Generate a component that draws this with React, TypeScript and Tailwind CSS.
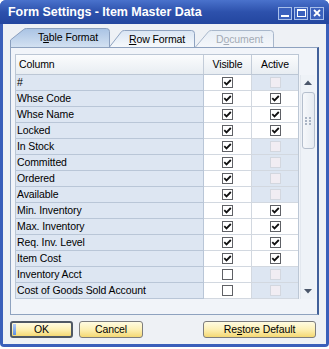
import React from "react";

type CB = "on" | "off" | "dis";

const rows: { name: string; vis: CB; act: CB }[] = [
  { name: "#", vis: "on", act: "dis" },
  { name: "Whse Code", vis: "on", act: "on" },
  { name: "Whse Name", vis: "on", act: "on" },
  { name: "Locked", vis: "on", act: "on" },
  { name: "In Stock", vis: "on", act: "dis" },
  { name: "Committed", vis: "on", act: "dis" },
  { name: "Ordered", vis: "on", act: "dis" },
  { name: "Available", vis: "on", act: "dis" },
  { name: "Min. Inventory", vis: "on", act: "on" },
  { name: "Max. Inventory", vis: "on", act: "on" },
  { name: "Req. Inv. Level", vis: "on", act: "on" },
  { name: "Item Cost", vis: "on", act: "on" },
  { name: "Inventory Acct", vis: "off", act: "dis" },
  { name: "Cost of Goods Sold Account", vis: "off", act: "dis" },
];

function Box({ s }: { s: CB }) {
  if (s === "dis") {
    return <div className="w-[11px] h-[11px] border border-[#d3d7df] bg-[#f1edf3]" />;
  }
  return (
    <div className="w-[11px] h-[11px] border border-[#5f6166] bg-white flex items-center justify-center">
      {s === "on" && (
        <svg width="9" height="9" viewBox="0 0 9 9">
          <path d="M1.3 4.2 L3.5 6.4 L7.8 2" fill="none" stroke="#111" strokeWidth="1.8" />
        </svg>
      )}
    </div>
  );
}

function Tab({
  w,
  h,
  d,
  fillTop,
  fillBot,
  stroke,
  id,
  className,
  children,
}: {
  w: number;
  h: number;
  d: string;
  fillTop: string;
  fillBot: string;
  stroke: string;
  id: string;
  className: string;
  children: React.ReactNode;
}) {
  return (
    <div className={"relative shrink-0 flex items-center " + className}>
      <svg className="absolute left-0 top-0" width={w} height={h} viewBox={`0 0 ${w} ${h}`}>
        <defs>
          <linearGradient id={id} x1="0" y1="0" x2="0" y2="1">
            <stop offset="0" stopColor={fillTop} />
            <stop offset="1" stopColor={fillBot} />
          </linearGradient>
        </defs>
        <path d={d + " Z"} fill={`url(#${id})`} stroke="none" />
        <path d={d} fill="none" stroke={stroke} strokeWidth="1" />
      </svg>
      <div className="relative w-full">{children}</div>
    </div>
  );
}

function Btn({
  className,
  children,
  def,
}: {
  className: string;
  children: React.ReactNode;
  def?: boolean;
}) {
  return (
    <div
      className={
        "relative h-[17px] rounded-[3px] flex items-center justify-center bg-gradient-to-b from-[#fffbe2] via-[#fdf0b4] to-[#f4d872] text-black " +
        (def ? "border-2 border-[#4f5864] " : "border border-[#7d7d7d] ") +
        className
      }
    >
      {def && <div className="absolute left-[1px] top-[1px] bottom-[1px] w-[3px] bg-gradient-to-b from-[#b4cdf6] to-[#5b8ee6]" />}
      {children}
    </div>
  );
}

export default function App() {
  return (
    <div className="w-[329px] h-[349px] bg-white font-['Liberation_Sans',Arial,sans-serif] text-[10.5px] tracking-[-0.1px] text-black overflow-hidden">
      <div className="w-[329px] h-[347px] flex flex-col rounded-t-[6px] rounded-b-[4px] overflow-hidden bg-[#3a5fba]">
        {/* Title bar */}
        <div className="h-[24px] shrink-0 flex items-center justify-between pl-[8px] pr-[5px] bg-gradient-to-b from-[#4a72cc] via-[#2d51ac] to-[#23469f]">
          <span className="text-white font-bold text-[12.5px] tracking-[-0.05px] leading-none pt-[1px]">
            Form Settings - Item Master Data
          </span>
          <div className="flex gap-[2px] pt-[2px]">
            <div className="w-[14px] h-[13px] border border-[#a8bfea] bg-[#3b61bd] flex items-end justify-center pb-[2px]">
              <div className="w-[8px] h-[2px] bg-white" />
            </div>
            <div className="w-[14px] h-[13px] border border-[#a8bfea] bg-[#3b61bd] flex items-center justify-center">
              <div className="w-[9px] h-[8px] border border-white border-t-[2px]" />
            </div>
            <div className="w-[14px] h-[13px] border border-[#a8bfea] bg-[#3b61bd] flex items-center justify-center">
              <svg width="8" height="8" viewBox="0 0 8 8">
                <path d="M1 1 L7 7 M7 1 L1 7" stroke="white" strokeWidth="1.8" />
              </svg>
            </div>
          </div>
        </div>

        {/* Body */}
        <div className="flex-1 mx-[3px] mb-[3px] bg-[#eef1f5] flex flex-col px-[7px] pt-[4px]">
          {/* Tabs */}
          <div className="h-[19px] flex items-end">
            <Tab
              w={100}
              h={19}
              id="t1"
              d="M0.5 19 V12 L13.5 1.6 Q14.6 0.5 16.5 0.5 H96.5 Q99.5 0.5 99.5 3.5 V19"
              fillTop="#a9c3e4"
              fillBot="#d3e1f1"
              stroke="#8a9fbe"
              className="w-[100px] h-[19px] z-20 pl-[16px]"
            >
              <div className="text-center pt-[1px]">
                T<span className="underline">a</span>ble Format
              </div>
            </Tab>
            <Tab
              w={86}
              h={17}
              id="t2"
              d="M0.5 17 L12.5 1.6 Q13.5 0.5 15.5 0.5 H82.5 Q85.5 0.5 85.5 3.5 V17"
              fillTop="#d9e5f3"
              fillBot="#f6f9fc"
              stroke="#8fa3c0"
              className="w-[86px] h-[17px] ml-[-1px] z-10 pl-[10px]"
            >
              <div className="text-center pt-[2px]">
                <span className="underline">R</span>ow Format
              </div>
            </Tab>
            <Tab
              w={79}
              h={17}
              id="t3"
              d="M0.5 17 L13.5 1.6 Q14.5 0.5 16.5 0.5 H75.5 Q78.5 0.5 78.5 3.5 V17"
              fillTop="#e6edf5"
              fillBot="#f5f7fa"
              stroke="#a8b7cb"
              className="w-[79px] h-[17px] pl-[10px] text-[#a3abb6]"
            >
              <div className="text-center pt-[2px]">
                D<span className="underline">o</span>cument
              </div>
            </Tab>
          </div>

          {/* Panel */}
          <div className="h-[268px] shrink-0 border border-[#8ea2bf] border-r-[2px] border-r-[#41609a] bg-[#f1f4f9] pl-[4px] pt-[6px] flex">
            {/* Grid */}
            <div className="w-[284px] shrink-0 flex flex-col">
              <div className="flex h-[21px] border border-[#bcc7d5] bg-gradient-to-b from-[#fbfcfd] to-[#e8edf2]">
                <div className="w-[188px] pl-[3px] flex items-center border-r border-[#c3ccd8]">Column</div>
                <div className="w-[48px] flex items-center justify-center border-r border-[#c3ccd8]">Visible</div>
                <div className="w-[46px] flex items-center justify-center">Active</div>
              </div>
              {rows.map((r) => (
                <div key={r.name} className="flex h-[16px] border-l border-r border-[#bcc7d5]">
                  <div className="w-[188px] pl-[1px] flex items-center bg-[#dde6f2] border-b border-r border-[#b9c6d7] leading-none">
                    {r.name}
                  </div>
                  <div className="w-[48px] flex items-center justify-center bg-white border-b border-r border-[#d2d8e0]">
                    <Box s={r.vis} />
                  </div>
                  <div
                    className={
                      "w-[46px] flex items-center justify-center border-b border-[#d2d8e0] " +
                      (r.act === "dis" ? "bg-[#dde6f2]" : "bg-white")
                    }
                  >
                    <Box s={r.act} />
                  </div>
                </div>
              ))}
            </div>
            {/* Scrollbar */}
            <div className="w-[15px] shrink-0 ml-[1px] mt-[21px] h-[224px] flex flex-col items-center bg-[#eef2f7] border-l border-[#e2e7ee]">
              <div className="h-[15px] flex items-center justify-center">
                <svg width="8" height="5" viewBox="0 0 8 5">
                  <path d="M0 5 L4 0.5 L8 5 Z" fill="#4a566a" />
                </svg>
              </div>
              <div className="w-[13px] h-[57px] mt-[2px] rounded-[3px] border border-[#b5bfcd] bg-gradient-to-r from-[#f6f8fb] to-[#e6ebf1] flex items-center justify-center">
                <div className="grid grid-cols-2 gap-x-[2px] gap-y-[1px]">
                  {[0, 1, 2, 3, 4, 5].map((i) => (
                    <div key={i} className="w-[2px] h-[2px] bg-[#a9b4c4]" />
                  ))}
                </div>
              </div>
              <div className="flex-1" />
              <div className="h-[15px] flex items-center justify-center">
                <svg width="8" height="5" viewBox="0 0 8 5">
                  <path d="M0 0 L4 4.5 L8 0 Z" fill="#4a566a" />
                </svg>
              </div>
            </div>
          </div>

          {/* Buttons */}
          <div className="flex mt-[6px] pr-[3px]">
            <Btn def className="w-[63px]">OK</Btn>
            <Btn className="w-[64px] ml-[6px]">Cancel</Btn>
            <div className="flex-1" />
            <Btn className="w-[113px]">
              <span>
                Re<span className="underline">s</span>tore Default
              </span>
            </Btn>
          </div>
        </div>
      </div>
    </div>
  );
}
